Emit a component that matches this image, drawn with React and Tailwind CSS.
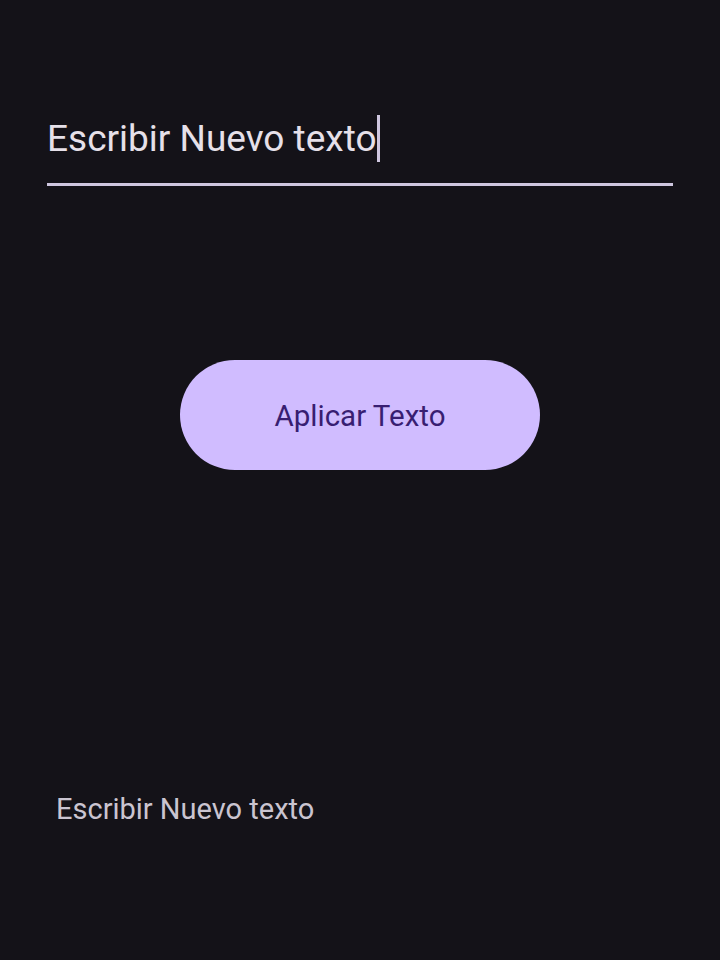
export default function App() {
  return (
    <div className="w-[720px] h-[960px] bg-[#141218] flex flex-col" style={{ fontFamily: "Roboto, 'Noto Sans', sans-serif" }}>
      <div className="mx-[47px] mt-[108px] flex flex-col">
        <div className="flex items-center h-[60px]">
          <span className="text-[37px] leading-none text-[#e6e0e9]">Escribir Nuevo texto</span>
          <span className="w-[3px] h-[47px] bg-[#cfc6df] ml-[0px]"></span>
        </div>
        <div className="h-[3px] bg-[#cfc6df] mt-[15px]"></div>
      </div>
      <div className="flex justify-center mt-[174px]">
        <button className="w-[360px] h-[110px] rounded-full bg-[#d0bcff] text-[#381e72] text-[29.5px] pt-[3px]">Aplicar Texto</button>
      </div>
      <div className="ml-[56px] mt-[325px] text-[29px] leading-none text-[#cac4d0]">Escribir Nuevo texto</div>
    </div>
  );
}
